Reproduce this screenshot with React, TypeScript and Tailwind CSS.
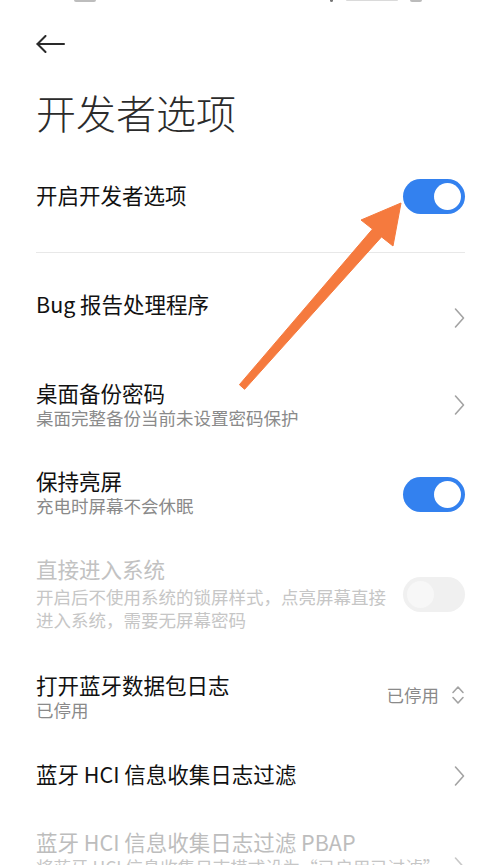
import React from "react";

const FONT = { fontFamily: '"Noto Sans CJK SC", "Noto Sans", sans-serif' };

function Chevron({ color = "#a3a3a3" }: { color?: string }) {
  return (
    <svg width="12" height="24" viewBox="0 0 12 24" fill="none">
      <path d="M2.5 3 L10.5 12 L2.5 21" stroke={color} strokeWidth="1.6" strokeLinecap="round" strokeLinejoin="round" />
    </svg>
  );
}

function UpDown() {
  return (
    <svg width="14" height="24" viewBox="0 0 14 24" fill="none">
      <path d="M2 9.5 L7 4 L12 9.5" stroke="#a3a3a3" strokeWidth="1.6" strokeLinecap="round" strokeLinejoin="round" />
      <path d="M2 14.5 L7 20 L12 14.5" stroke="#a3a3a3" strokeWidth="1.6" strokeLinecap="round" strokeLinejoin="round" />
    </svg>
  );
}

function Toggle({ on, disabled }: { on?: boolean; disabled?: boolean }) {
  if (disabled) {
    return (
      <div className="w-[62px] h-[35px] rounded-full bg-[#f0f0f0] p-[4px] flex items-center justify-start">
        <div className="w-[27px] h-[27px] rounded-full bg-[#f7f7f7]" />
      </div>
    );
  }
  return (
    <div className={`w-[62px] h-[35px] rounded-full p-[4px] flex items-center ${on ? "bg-[#3381ef] justify-end" : "bg-[#e6e6e6] justify-start"}`}>
      <div className="w-[27px] h-[27px] rounded-full bg-white" />
    </div>
  );
}

export default function App() {
  return (
    <div className="relative w-[500px] h-[865px] overflow-hidden bg-white" style={FONT}>
      {/* status bar remnants */}
      <div className="h-[20px] relative">
        <div className="absolute left-[74px] top-0 w-[22px] h-[2px] rounded-b bg-[#bdbdbd]" />
        <div className="absolute left-[330px] top-0 w-[3px] h-[2px] rounded-b bg-[#777]" />
        <div className="absolute left-[346px] top-0 w-[52px] h-[1px] rounded-b bg-[#dadada]" />
        <div className="absolute left-[410px] top-0 w-[12px] h-[2px] rounded-b bg-[#bbb]" />
      </div>

      <div className="px-[36px] pr-[35px]">
        {/* back */}
        <div className="h-[48px] flex items-center">
          <svg width="29" height="18" viewBox="0 0 29 18" fill="none">
            <path d="M1.5 9 H28" stroke="#2a2a2a" strokeWidth="2" strokeLinecap="round" />
            <path d="M9.5 1 L1.5 9 L9.5 17" stroke="#2a2a2a" strokeWidth="2" strokeLinecap="round" strokeLinejoin="round" />
          </svg>
        </div>

        {/* title */}
        <div className="mt-[16px] text-[40px] leading-[56px] font-light text-[#2b2b2b]">开发者选项</div>

        {/* enable dev */}
        <div className="mt-[39px] h-[35px] flex items-center justify-between">
          <div className="pb-[4px] text-[21.5px] leading-[26px] text-[#111]">开启开发者选项</div>
          <Toggle on />
        </div>

        <div className="mt-[38px] h-px bg-[#e8e8e8]" />

        {/* Bug */}
        <div className="mt-[38px] flex items-start justify-between">
          <div className="text-[21.5px] leading-[26px] text-[#111]">Bug 报告处理程序</div>
          <div className="mt-[15px]"><Chevron /></div>
        </div>

        {/* 桌面备份密码 */}
        <div className="mt-[50px] flex items-start justify-between">
          <div>
            <div className="text-[21.5px] leading-[26px] text-[#111]">桌面备份密码</div>
            <div className="text-[17.5px] leading-[24px] text-[#8a8a8a]">桌面完整备份当前未设置密码保护</div>
          </div>
          <div className="mt-[13px]"><Chevron /></div>
        </div>

        {/* 保持亮屏 */}
        <div className="mt-[38px] flex items-start justify-between">
          <div>
            <div className="text-[21.5px] leading-[26px] text-[#111]">保持亮屏</div>
            <div className="text-[17.5px] leading-[24px] text-[#8a8a8a]">充电时屏幕不会休眠</div>
          </div>
          <div className="mt-[9px]"><Toggle on /></div>
        </div>

        {/* 直接进入系统 */}
        <div className="mt-[38px] flex items-start justify-between">
          <div className="w-[355px]">
            <div className="text-[21.5px] leading-[26px] text-[#c2c2c2]">直接进入系统</div>
            <div className="mt-[3px] text-[17.5px] leading-[23px] text-[#c6c6c6]">开启后不使用系统的锁屏样式，点亮屏幕直接进入系统，需要无屏幕密码</div>
          </div>
          <div className="mt-[21px]"><Toggle disabled /></div>
        </div>

        {/* 打开蓝牙数据包日志 */}
        <div className="mt-[41px] flex items-start justify-between">
          <div>
            <div className="text-[21.5px] leading-[26px] text-[#111]">打开蓝牙数据包日志</div>
            <div className="text-[17.5px] leading-[24px] text-[#8a8a8a]">已停用</div>
          </div>
          <div className="mt-[11px] flex items-center gap-[12px]">
            <span className="text-[17.5px] leading-[24px] text-[#8a8a8a]">已停用</span>
            <UpDown />
          </div>
        </div>

        {/* 蓝牙 HCI */}
        <div className="mt-[39px] flex items-start justify-between">
          <div className="text-[21.5px] leading-[26px] text-[#111]">蓝牙 HCI 信息收集日志过滤</div>
          <div className="mt-[3px]"><Chevron /></div>
        </div>

        {/* PBAP */}
        <div className="mt-[41px] flex items-start justify-between">
          <div className="w-[380px]">
            <div className="text-[21.5px] leading-[26px] text-[#bdbdbd]">蓝牙 HCI 信息收集日志过滤 PBAP</div>
            <div className="text-[17.5px] leading-[24px] text-[#c6c6c6] whitespace-nowrap">将蓝牙 HCI 信息收集日志模式设为“已启用已过滤”</div>
          </div>
          <div className="mt-[26px]"><Chevron color="#c8c8c8" /></div>
        </div>
      </div>

      {/* annotation arrow overlay */}
      <svg className="absolute left-0 top-0 pointer-events-none" width="500" height="865" viewBox="0 0 500 865">
        <polygon
          points="239.4,384.7 372.5,229.1 361,220 401,203 393,246 381.5,236.9 244.6,389.3"
          fill="#f57a3e"
          stroke="#f57a3e"
          strokeWidth="1"
          strokeLinejoin="round"
        />
      </svg>
    </div>
  );
}
